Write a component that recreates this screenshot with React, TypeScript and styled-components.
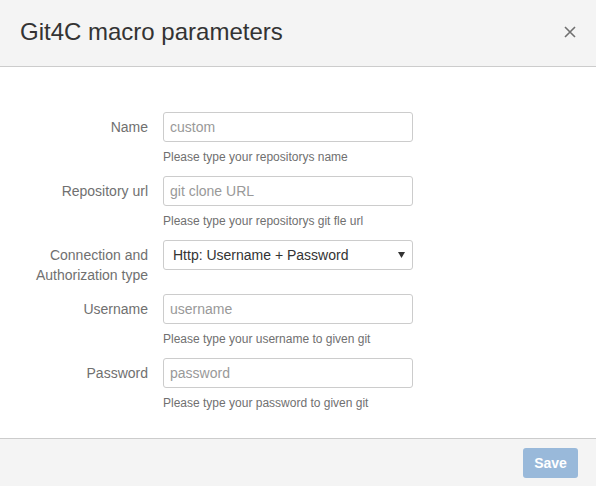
import styled, { createGlobalStyle } from 'styled-components'

const GlobalStyle = createGlobalStyle`
  html, body {
    margin: 0;
    padding: 0;
    background: #fff;
    font-family: Arial, "Liberation Sans", sans-serif;
  }
  * { box-sizing: border-box; }
`

interface IField {
  label: string
  placeholder?: string
  help?: string
  select?: string
}

const fields: IField[] = [
  { label: 'Name', placeholder: 'custom', help: 'Please type your repositorys name' },
  { label: 'Repository url', placeholder: 'git clone URL', help: 'Please type your repositorys git fle url' },
  { label: 'Connection and Authorization type', select: 'Http: Username + Password' },
  { label: 'Username', placeholder: 'username', help: 'Please type your username to given git' },
  { label: 'Password', placeholder: 'password', help: 'Please type your password to given git' },
]

export default function App() {
  return (
    <>
      <GlobalStyle />
      <Dialog>
        <Header>
          <Title>Git4C macro parameters</Title>
          <Close aria-label="close">
            <svg width="12" height="12" viewBox="0 0 12 12">
              <path d="M1 1 L11 11 M11 1 L1 11" stroke="#707070" strokeWidth="1.6" />
            </svg>
          </Close>
        </Header>
        <Content>
          {fields.map((f) => (
            <Row key={f.label}>
              <Label>{f.label}</Label>
              <Field>
                {f.select ? (
                  <Select>
                    <span>{f.select}</span>
                    <svg width="7" height="6" viewBox="0 0 7 6">
                      <path d="M0 0 H7 L3.5 6 Z" fill="#333" />
                    </svg>
                  </Select>
                ) : (
                  <Input placeholder={f.placeholder} />
                )}
                {f.help && <Help>{f.help}</Help>}
              </Field>
            </Row>
          ))}
        </Content>
        <Footer>
          <SaveButton disabled>Save</SaveButton>
        </Footer>
      </Dialog>
    </>
  )
}

const Dialog = styled.div`
  width: 596px;
  height: 486px;
  display: flex;
  flex-direction: column;
  background: #fff;
`

const Header = styled.div`
  height: 67px;
  flex-shrink: 0;
  display: flex;
  align-items: center;
  justify-content: space-between;
  padding: 0 20px 2px 20px;
  background: #f4f4f4;
  border-bottom: 1px solid #cccccc;
`

const Title = styled.h2`
  margin: 0;
  font-size: 24px;
  font-weight: normal;
  color: #333333;
`

const Close = styled.button`
  border: 0;
  background: none;
  padding: 0;
  display: flex;
  cursor: pointer;
`

const Content = styled.div`
  flex: 1;
  padding: 45px 20px 0 20px;
`

const Row = styled.div`
  display: flex;
  gap: 15px;
  margin-bottom: 9px;
`

const Label = styled.label`
  width: 128px;
  flex-shrink: 0;
  text-align: right;
  padding-top: 5px;
  font-size: 14px;
  line-height: 20px;
  color: #707070;
`

const Field = styled.div`
  display: flex;
  flex-direction: column;
`

const Input = styled.input`
  width: 250px;
  height: 30px;
  border: 1px solid #cccccc;
  border-radius: 3px;
  padding: 0 6px;
  font-family: inherit;
  font-size: 14px;
  color: #333;
  outline: none;

  &::placeholder {
    color: #999999;
  }
`

const Select = styled.div`
  width: 250px;
  height: 30px;
  border: 1px solid #cccccc;
  border-radius: 3px;
  padding: 0 7px 0 9px;
  display: flex;
  align-items: center;
  justify-content: space-between;
  font-size: 14px;
  color: #333333;
`

const Help = styled.div`
  margin-top: 5px;
  font-size: 12px;
  line-height: 20px;
  color: #707070;
`

const Footer = styled.div`
  height: 48px;
  flex-shrink: 0;
  display: flex;
  align-items: center;
  justify-content: flex-end;
  padding: 0 18px;
  background: #f4f4f4;
  border-top: 1px solid #cccccc;
`

const SaveButton = styled.button`
  width: 55px;
  height: 30px;
  border: 0;
  border-radius: 3px;
  background: #99b9da;
  color: #fff;
  font-family: inherit;
  font-size: 14px;
  font-weight: bold;
`
